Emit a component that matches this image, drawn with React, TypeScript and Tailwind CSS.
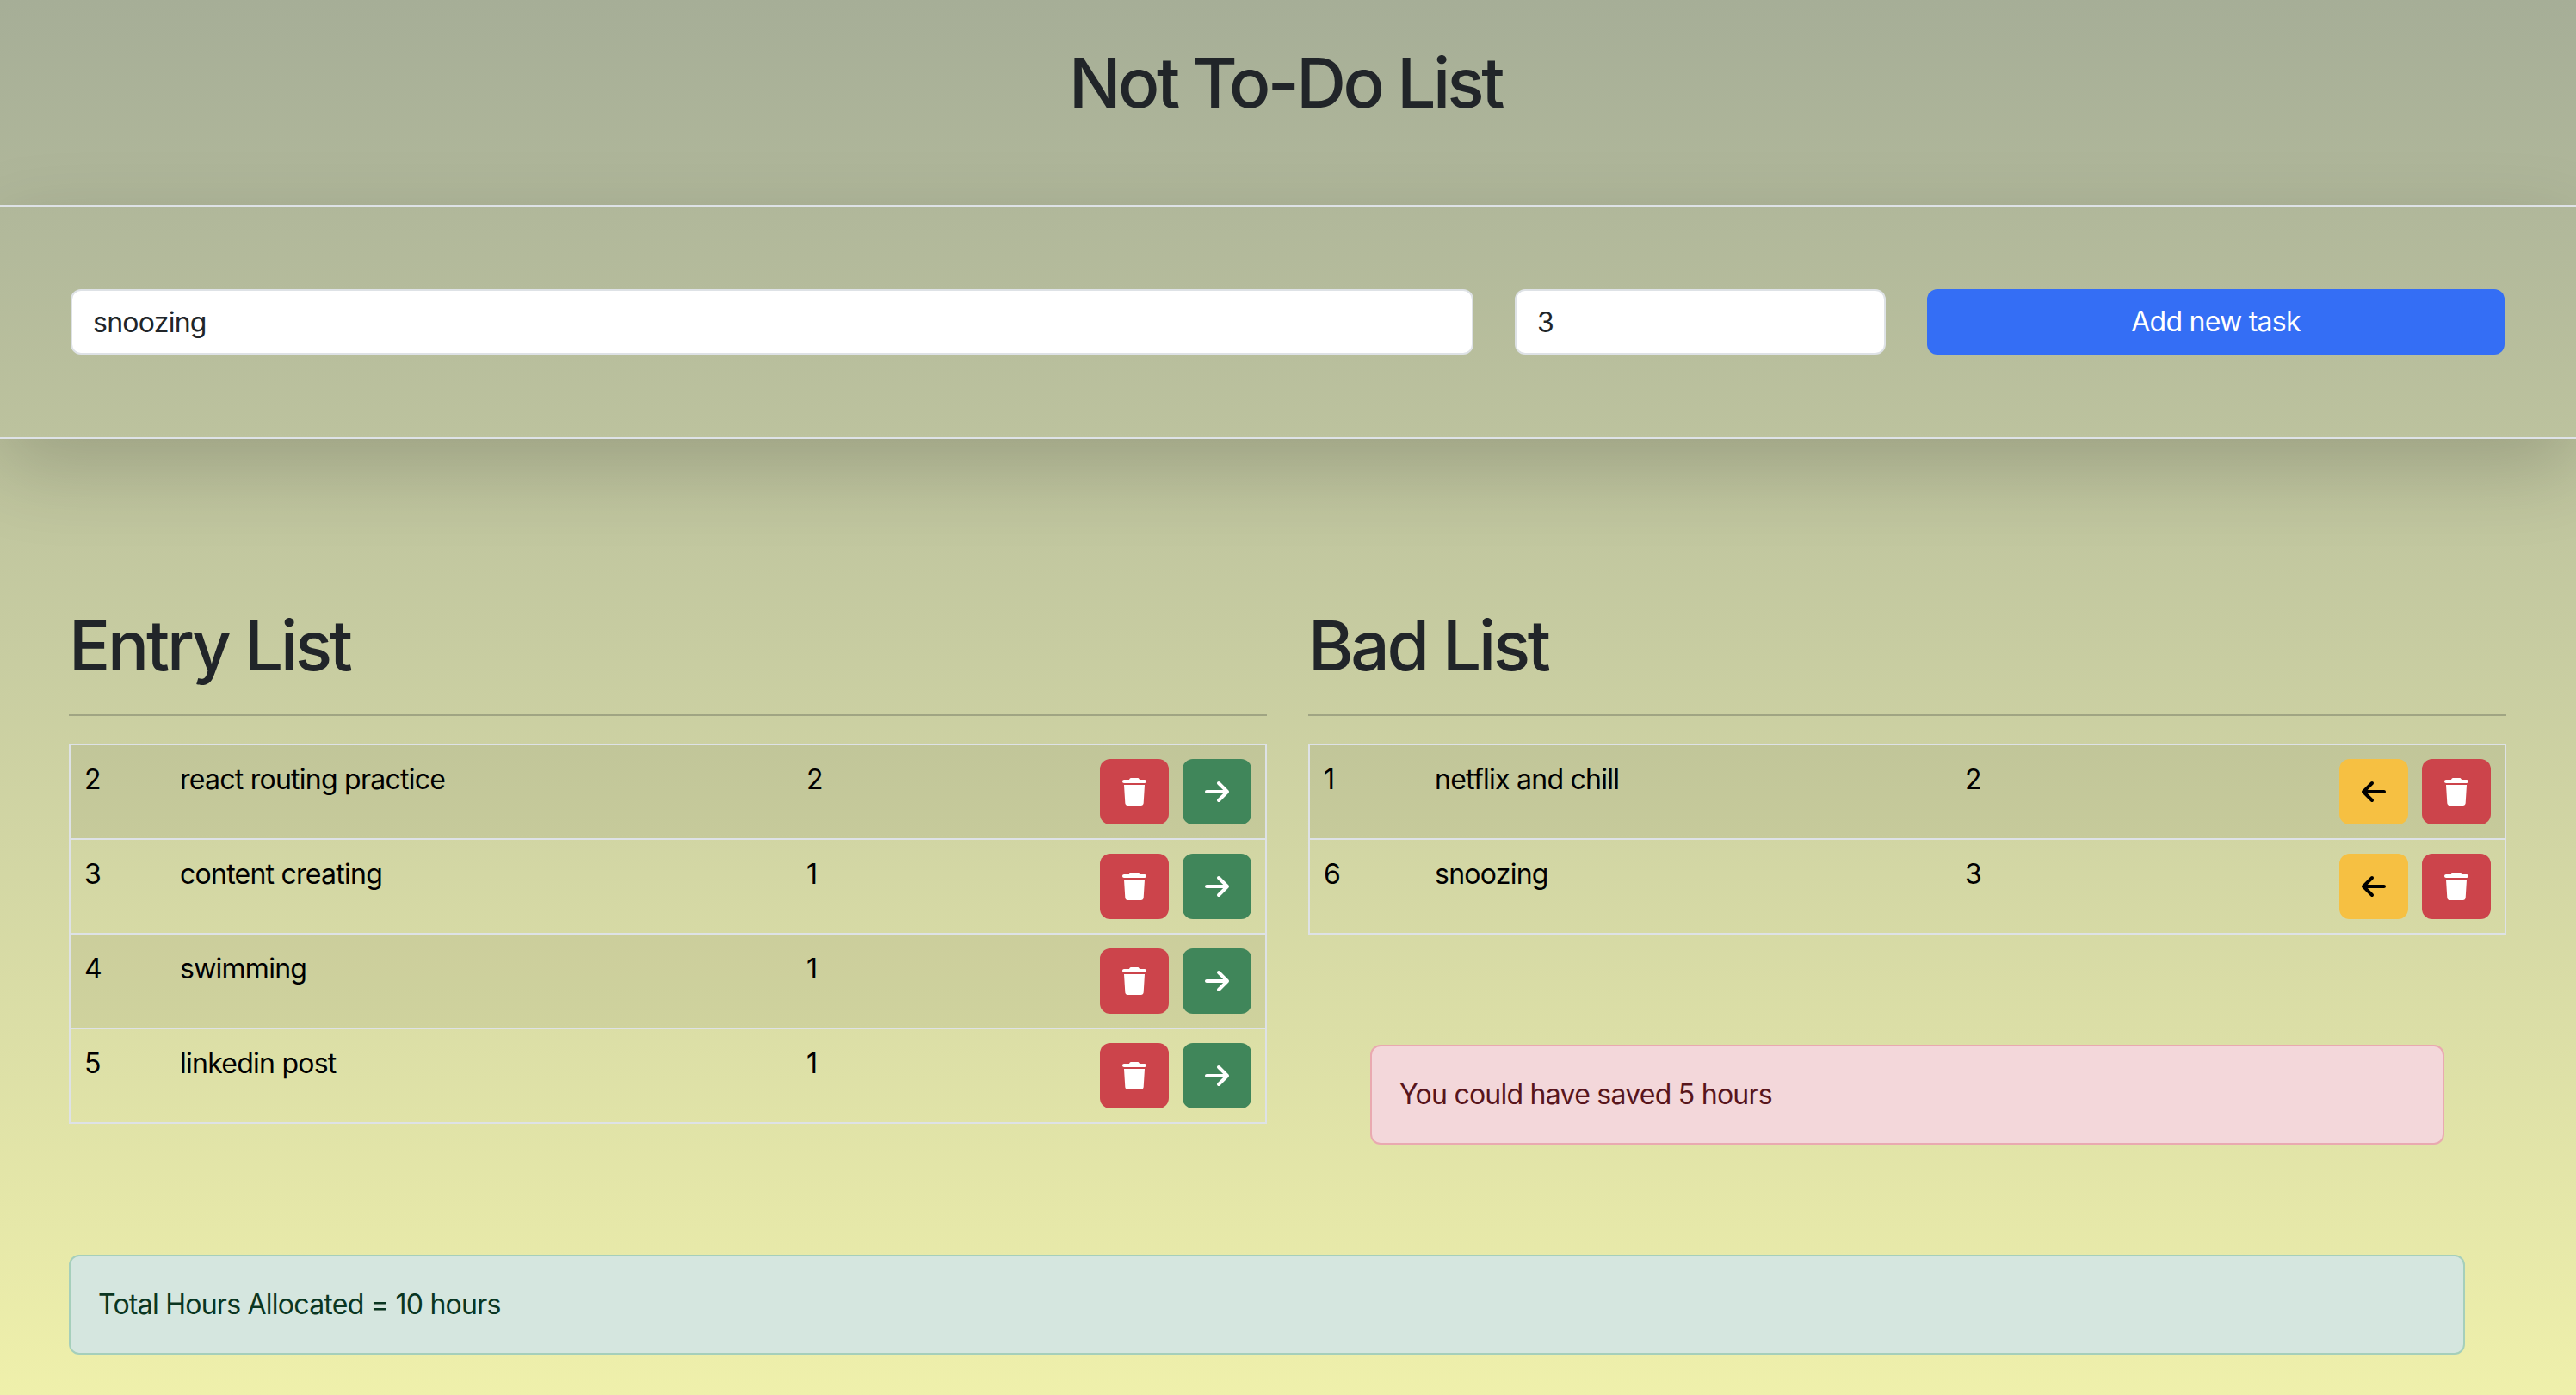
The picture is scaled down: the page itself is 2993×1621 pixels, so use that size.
import { FaArrowLeft, FaArrowRight, FaTrash } from 'react-icons/fa6';

const entryList = [
  { id: 2, task: 'react routing practice', hours: 2 },
  { id: 3, task: 'content creating', hours: 1 },
  { id: 4, task: 'swimming', hours: 1 },
  { id: 5, task: 'linkedin post', hours: 1 },
];

const badList = [
  { id: 1, task: 'netflix and chill', hours: 2 },
  { id: 6, task: 'snoozing', hours: 3 },
];

function IconButton({ color, children }: { color: string; children: React.ReactNode }) {
  return (
    <button className={`flex h-[76px] w-20 items-center justify-center rounded-xl text-[32px] ${color}`}>
      {children}
    </button>
  );
}

function DeleteButton() {
  return (
    <IconButton color="bg-[#cc444b] text-white">
      <FaTrash />
    </IconButton>
  );
}

type Task = { id: number; task: string; hours: number };

function TaskRows({ tasks, idWidth, taskWidth, isBad }: { tasks: Task[]; idWidth: string; taskWidth: string; isBad?: boolean }) {
  return (
    <div className="border-b-2 border-[#dee2e6] text-black">
      {tasks.map((t, index) => (
        <div
          key={t.id}
          className={`flex h-[110px] border-x-2 border-t-2 border-[#dee2e6] ${index % 2 === 0 ? 'bg-black/5' : ''}`}
        >
          <div className={`${idWidth} p-4`}>{t.id}</div>
          <div className={`${taskWidth} p-4`}>{t.task}</div>
          <div className="p-4">{t.hours}</div>
          <div className="ml-auto flex gap-4 p-4">
            {isBad ? (
              <>
                <IconButton color="bg-[#f6c042] text-black">
                  <FaArrowLeft />
                </IconButton>
                <DeleteButton />
              </>
            ) : (
              <>
                <DeleteButton />
                <IconButton color="bg-[#40865a] text-white">
                  <FaArrowRight />
                </IconButton>
              </>
            )}
          </div>
        </div>
      ))}
    </div>
  );
}

export default function App() {
  return (
    <div className="min-h-[1621px] bg-gradient-to-b from-[#a6ae97] to-[#eff0ab] pb-[47px] font-['Inter',sans-serif] text-[32px] leading-[48px] tracking-[-0.75px] text-[#212529]">
      <header className="h-[238px] pt-12 pr-1.5 text-center">
        <h1 className="text-[80px] leading-[96px] font-medium tracking-[-3.5px]">Not To-Do List</h1>
      </header>

      <form className="flex gap-x-12 border-y-2 border-[#dee2e6] pr-[83px] pl-[82px] py-24 shadow-[0_32px_96px_rgba(0,0,0,0.175)]">
        <input
          defaultValue="snoozing"
          className="h-[76px] w-[1630px] rounded-xl border-2 border-[#dee2e6] bg-white px-6 text-[#212529]"
        />
        <input
          defaultValue="3"
          className="h-[76px] w-[431px] rounded-xl border-2 border-[#dee2e6] bg-white px-6 text-[#212529]"
        />
        <button type="button" className="h-[76px] w-[671px] rounded-xl bg-[#346ef5] text-white">
          Add new task
        </button>
      </form>

      <main className="mt-[192px] grid grid-cols-2 gap-x-12 pr-[81px] pl-20">
        <section>
          <h1 className="text-[80px] leading-[96px] font-medium tracking-[-3.2px]">Entry List</h1>
          <hr className="my-8 border-t-2 border-[#212529]/25" />
          <TaskRows tasks={entryList} idWidth="w-[111px]" taskWidth="w-[728px]" />
        </section>
        <section>
          <h1 className="text-[80px] leading-[96px] font-medium tracking-[-3.2px]">Bad List</h1>
          <hr className="my-8 border-t-2 border-[#212529]/25" />
          <TaskRows tasks={badList} idWidth="w-[129px]" taskWidth="w-[616px]" isBad />
          <div className="mx-[72px] mt-32 h-[116px] rounded-xl border-2 border-[#e9a9b0] bg-[#f3d7da] px-8 py-[32px] text-[#58151c]">
            You could have saved 5 hours
          </div>
        </section>
      </main>

      <div className="mt-32 ml-20 h-[116px] w-[2784px] rounded-xl border-2 border-[#a5cfbb] bg-[#d5e6df] px-8 py-[32px] text-[#0a3622]">
        Total Hours Allocated = 10 hours
      </div>
    </div>
  );
}
